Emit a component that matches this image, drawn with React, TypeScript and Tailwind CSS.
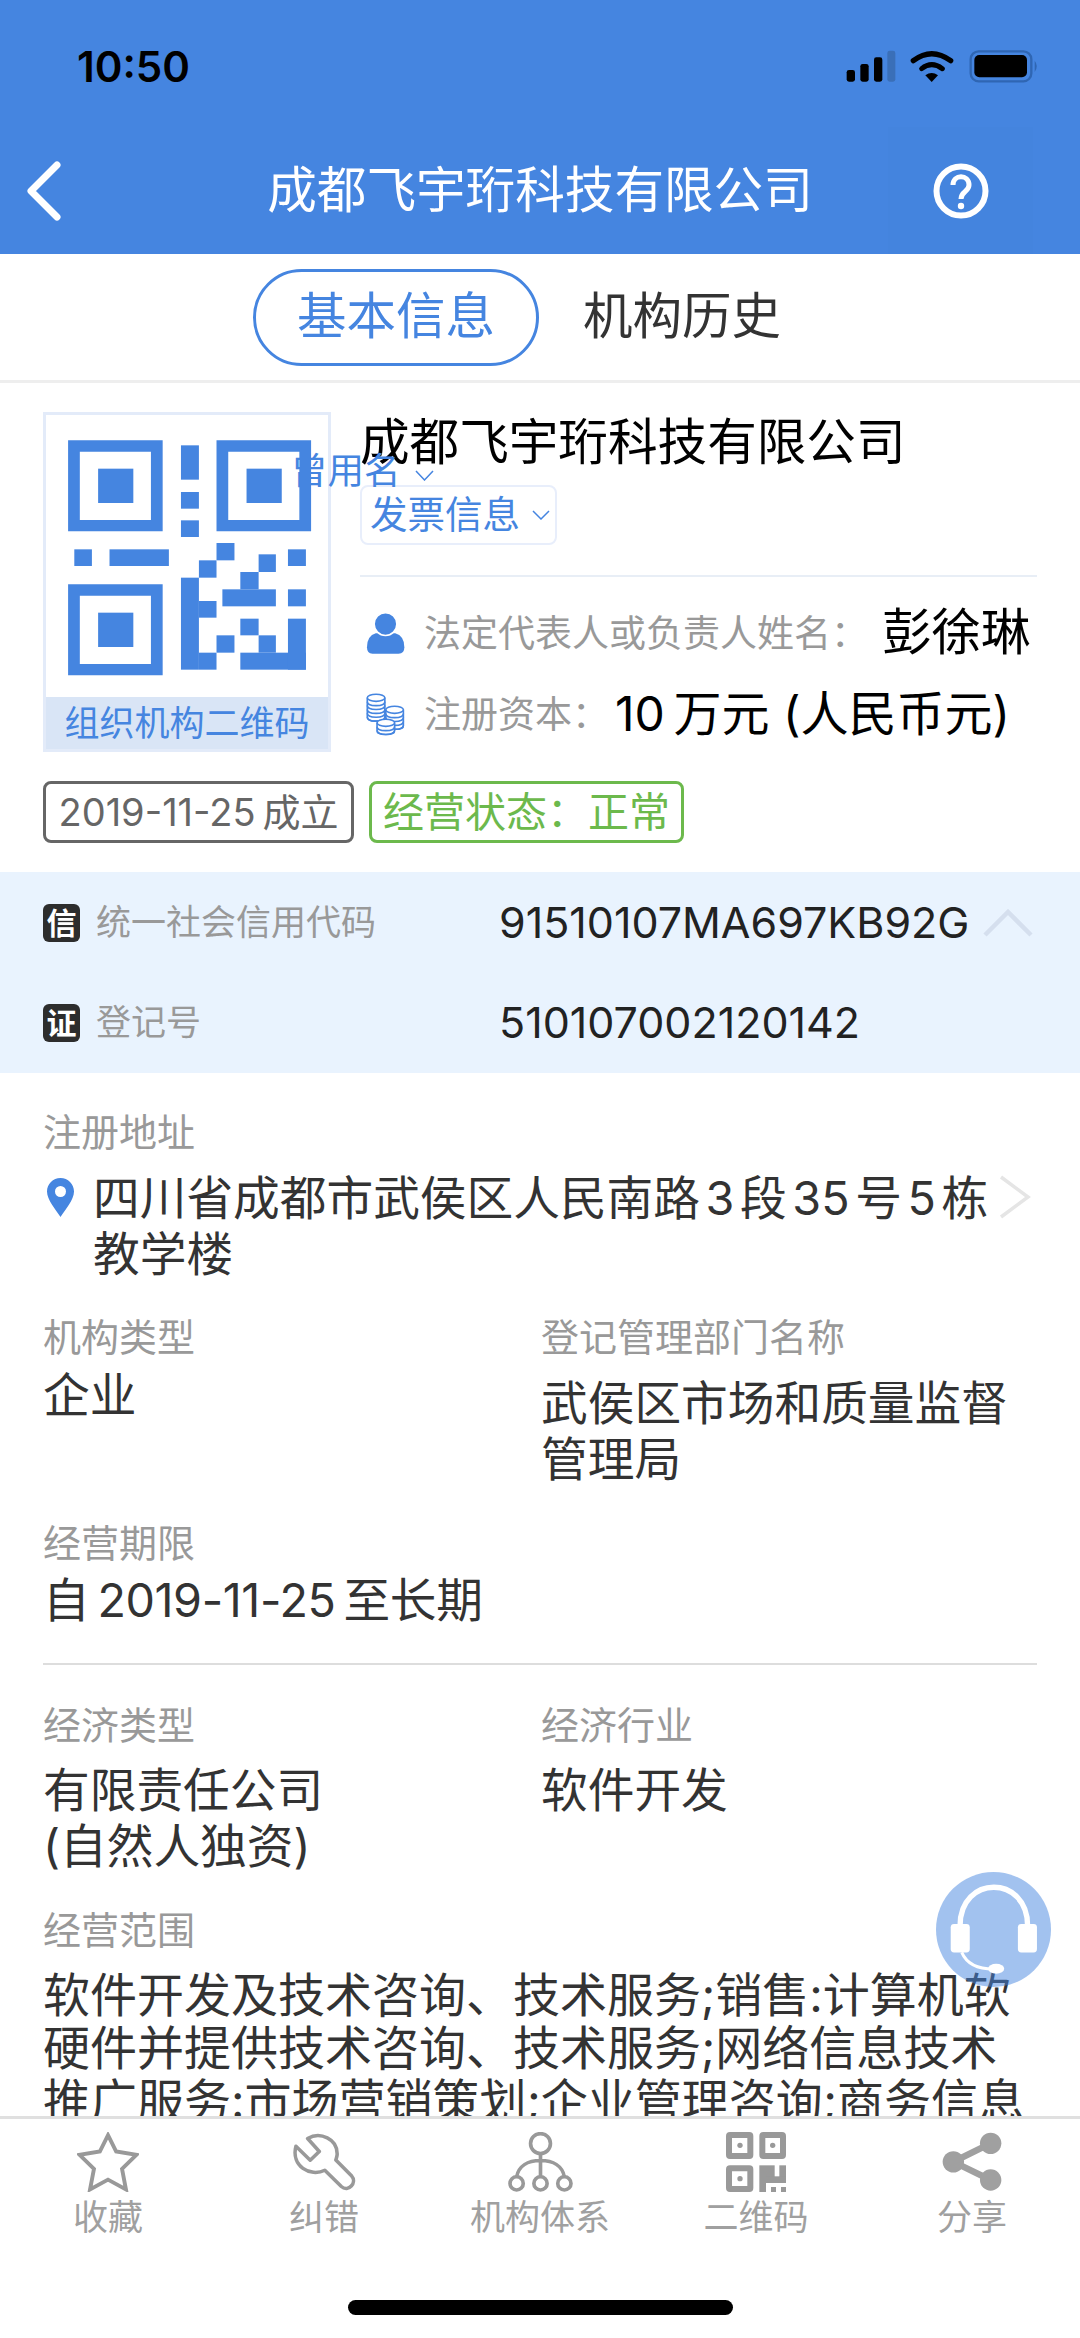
import type { ReactNode } from 'react';

const qrRects = [
    [525, 165, 52, 103], [525, 305, 52, 50], [525, 390, 52, 50],
    [216, 477, 51, 50], [318, 477, 172, 50],
    [628, 458, 52, 52], [750, 492, 50, 53], [835, 477, 52, 50],
    [577, 510, 51, 52], [697, 545, 53, 52], [645, 597, 155, 51], [835, 597, 52, 51],
    [525, 562, 52, 276], [577, 632, 51, 50], [577, 787, 51, 51],
    [628, 735, 52, 52], [697, 685, 53, 50], [750, 735, 50, 52], [697, 787, 190, 51], [835, 685, 52, 153],
];

function QrFinder({ x, y }: { x: number; y: number }) {
    return (
        <g>
            <path d={`M${x} ${y}h274v273h-274zM${x + 34} ${y + 34}v205h206v-205z`} fill="#4585e0" fillRule="evenodd" />
            <rect x={x + 87} y={y + 85} width={102} height={103} fill="#4585e0" />
        </g>
    );
}

function QrBox() {
    return (
        <div className="w-[288px] h-[340px] shrink-0 border-[3px] border-[#e3ebf9] flex flex-col">
            <svg className="w-[282px] h-[282px]" viewBox="134 74 817 846" preserveAspectRatio="none">
                <QrFinder x={198} y={150} />
                <QrFinder x={628} y={150} />
                <QrFinder x={198} y={582} />
                {qrRects.map(([x, y, w, h]) => (
                    <rect key={`${x}-${y}`} x={x} y={y} width={w} height={h} fill="#4585e0" />
                ))}
            </svg>
            <div className="flex-1 bg-[#d9e5f6] flex items-center justify-center text-[#4585e0] text-[35px] leading-none whitespace-nowrap">
                组织机构二维码
            </div>
        </div>
    );
}

function PersonIcon() {
    return (
        <svg className="w-[39px] h-[43px] shrink-0" viewBox="30 28 120 130">
            <path d="M33 135Q33 100 60 92L120 92Q148 100 148 135Q148 155 130 155L50 155Q33 155 33 135Z" fill="#4585e0" />
            <circle cx="90" cy="64" r="35" fill="#4585e0" stroke="#fff" strokeWidth="5" />
        </svg>
    );
}

function CoinStack({ cx, top, layers }: { cx: number; top: number; layers: number }) {
    const bottom = top + layers * 12;
    return (
        <g fill="#fff" stroke="#4585e0" strokeWidth="5">
            <path d={`M${cx - 27} ${top}V${bottom}C${cx - 27} ${bottom + 16} ${cx + 27} ${bottom + 16} ${cx + 27} ${bottom}V${top}`} />
            {Array.from({ length: layers }).map((_, i) => (
                <path
                    key={i}
                    fill="none"
                    d={`M${cx - 27} ${top + (i + 1) * 12}C${cx - 27} ${top + (i + 1) * 12 + 16} ${cx + 27} ${top + (i + 1) * 12 + 16} ${cx + 27} ${top + (i + 1) * 12}`}
                />
            ))}
            <ellipse cx={cx} cy={top} rx="27" ry="11" />
        </g>
    );
}

function CoinsIcon() {
    return (
        <svg className="w-[39px] h-[45px] shrink-0" viewBox="32 282 120 135">
            <CoinStack cx={63} top={298} layers={5} />
            <CoinStack cx={120} top={335} layers={4} />
            <CoinStack cx={93} top={375} layers={2} />
        </svg>
    );
}

function Badge({ children }: { children: ReactNode }) {
    return (
        <div className="w-[37px] h-[38px] shrink-0 rounded-[6px] bg-[#2d2d2d] text-white text-[30px] font-bold leading-none flex items-center justify-center">
            {children}
        </div>
    );
}

function Label({ children }: { children: ReactNode }) {
    return <div className="h-[50px] text-[#999999] text-[38px] leading-[50px]">{children}</div>;
}

function Value({ children }: { children: ReactNode }) {
    return <div className="text-[#333333] text-[46.7px] leading-[56px]">{children}</div>;
}

function StatusBar() {
    return (
        <div className="h-[127px] flex justify-between pl-[77px] pr-[30px] pt-[46px]">
            <div className="text-[42px] leading-[42px] font-semibold text-black">10:50</div>
            <svg className="w-[220px] h-[60px] -mt-[6px]" viewBox="0 0 660 180">
                <rect x="50" y="90" width="25" height="35" rx="7" fill="#000" />
                <rect x="91" y="72" width="25" height="53" rx="7" fill="#000" />
                <rect x="132" y="52" width="25" height="73" rx="7" fill="#000" />
                <rect x="172" y="32" width="24" height="93" rx="7" fill="#3a6fb8" />
                <path d="M250 62Q305 20 362 62" fill="none" stroke="#000" strokeWidth="16" strokeLinecap="round" />
                <path d="M275 86Q305 62 337 86" fill="none" stroke="#000" strokeWidth="15" strokeLinecap="round" />
                <path d="M286 106Q305 92 324 106L305 126Z" fill="#000" />
                <rect x="422" y="34" width="182" height="90" rx="24" fill="none" stroke="#2f66b3" strokeWidth="7" />
                <rect x="433" y="45" width="158" height="67" rx="15" fill="#000" />
                <path d="M614 62Q627 78 614 96Z" fill="#2f66b3" />
            </svg>
        </div>
    );
}

function NavBar() {
    return (
        <div className="h-[127px] grid grid-cols-[192px_1fr_192px]">
            <div className="flex items-center pl-[26px]">
                <svg className="w-[36px] h-[60px]" viewBox="0 0 36 60">
                    <path d="M31 4L5 30L31 56" fill="none" stroke="#fff" strokeWidth="7" strokeLinecap="round" strokeLinejoin="round" />
                </svg>
            </div>
            <div className="flex items-center justify-center text-white text-[49.6px] leading-none whitespace-nowrap">
                成都飞宇珩科技有限公司
            </div>
            <div className="w-[145px] bg-[#4484de] flex items-center justify-center">
                <svg className="w-[56px] h-[56px]" viewBox="0 0 56 56">
                    <circle cx="28" cy="28" r="24.5" fill="none" stroke="#fff" strokeWidth="6" />
                    <path d="M20 22C20 11 36 11 36 22C36 29 28 28 28 36" fill="none" stroke="#fff" strokeWidth="5" />
                    <circle cx="28" cy="43" r="3.2" fill="#fff" />
                </svg>
            </div>
        </div>
    );
}

function Tabs() {
    return (
        <div className="h-[129px] border-b-[3px] border-[#eeeeee] flex items-center justify-center text-[49.5px] leading-none -ml-[2px]">
            <div className="w-[286px] h-[97px] rounded-full border-[3px] border-[#4585e0] text-[#4585e0] flex items-center justify-center">
                基本信息
            </div>
            <div className="w-[286px] text-center text-[#333333]">机构历史</div>
        </div>
    );
}

function Summary() {
    return (
        <div className="relative px-[43px] pt-[29px] pb-[29px]">
            <div className="flex gap-[29px]">
                <QrBox />
                <div className="flex-1">
                    <div className="text-black text-[49.6px] leading-[60px] whitespace-nowrap">成都飞宇珩科技有限公司</div>
                    <div className="mt-[13px] w-[197px] h-[60px] pl-[8px] border-[2px] border-[#e8eefb] rounded-[8px] flex items-center gap-[12px] text-[#4585e0] text-[37.5px] leading-none whitespace-nowrap">
                        发票信息
                        <svg className="w-[18px] h-[10px]" viewBox="0 0 18 10">
                            <path d="M1 1L9 9L17 1" fill="none" stroke="#4585e0" strokeWidth="1.5" />
                        </svg>
                    </div>
                    <div className="mt-[30px] h-[2px] bg-[#e8eef6]" />
                    <div className="mt-[26px] h-[60px] pl-[6px] flex items-center">
                        <PersonIcon />
                        <span className="ml-[19px] text-[#999999] text-[37px] leading-none whitespace-nowrap">法定代表人或负责人姓名：</span>
                        <span className="ml-[14px] text-black text-[49.5px] leading-none whitespace-nowrap">彭徐琳</span>
                    </div>
                    <div className="mt-[21px] h-[60px] pl-[6px] flex items-center">
                        <CoinsIcon />
                        <span className="ml-[19px] text-[#999999] text-[37px] leading-none whitespace-nowrap">注册资本：</span>
                        <span className="ml-[6px] text-black text-[48px] leading-none whitespace-nowrap">10{'\u2009'}万元 (人民币元)</span>
                    </div>
                </div>
            </div>
            <div className="mt-[29px] flex gap-[15px]">
                <div className="w-[311px] h-[62px] border-[3px] border-[#666666] rounded-[8px] flex items-center justify-center text-[#666666] text-[38px] leading-none whitespace-nowrap">
                    2019-11-25{'\u2009'}成立
                </div>
                <div className="w-[315px] h-[62px] border-[3px] border-[#6cb94c] rounded-[8px] flex items-center justify-center text-[#6cb94c] text-[41px] leading-none whitespace-nowrap">
                    经营状态：正常
                </div>
            </div>
            {/* overlaps the qr and the title, same in the app */}
            <div className="absolute left-[291px] top-[70px] flex items-center gap-[14px] text-[#4585e0] text-[36.5px] leading-none whitespace-nowrap">
                曾用名
                <svg className="w-[19px] h-[11px] mt-[9px]" viewBox="0 0 19 11">
                    <path d="M1 1L9.5 10L18 1" fill="none" stroke="#4585e0" strokeWidth="1.5" />
                </svg>
            </div>
        </div>
    );
}

function CodeBand() {
    return (
        <div className="h-[201px] bg-[#e9f3fe] pl-[43px] pr-[47px] flex flex-col">
            <div className="h-[100px] pt-[1px] flex items-center">
                <Badge>信</Badge>
                <div className="ml-[16px] w-[403px] text-[#999999] text-[35px] leading-none">统一社会信用代码</div>
                <div className="flex-1 text-[#222222] text-[43px] leading-none whitespace-nowrap">91510107MA697KB92G</div>
                <svg className="w-[50px] h-[28px]" viewBox="0 0 50 28">
                    <path d="M2 26L25 3L48 26" fill="none" stroke="#d5dfee" strokeWidth="4.5" />
                </svg>
            </div>
            <div className="h-[100px] pt-[1px] flex items-center">
                <Badge>证</Badge>
                <div className="ml-[16px] w-[403px] text-[#999999] text-[35px] leading-none">登记号</div>
                <div className="flex-1 text-[#222222] text-[43px] leading-none">510107002120142</div>
            </div>
        </div>
    );
}

function Details() {
    return (
        <div className="px-[43px] pt-[34px]">
            <Label>注册地址</Label>
            <div className="mt-[13px] flex">
                <svg className="w-[27px] h-[39px] mt-[8px] ml-[4px] shrink-0" viewBox="0 0 27 39">
                    <path d="M13.5 0C6 0 0 6 0 13.5C0 22 9 32 13.5 39C18 32 27 22 27 13.5C27 6 21 0 13.5 0Z" fill="#4585e0" />
                    <circle cx="13.5" cy="13.5" r="5.5" fill="#fff" />
                </svg>
                <div className="ml-[19px] w-[906px] whitespace-nowrap [word-spacing:-7.5px]">
                    <Value>
                        四川省成都市武侯区人民南路 3 段 35 号 5 栋
                        <br />
                        教学楼
                    </Value>
                </div>
                <svg className="w-[32px] h-[44px] mt-[5px] shrink-0" viewBox="0 0 32 44">
                    <path d="M2 2L29 22L2 42" fill="none" stroke="#e5e5e5" strokeWidth="3.5" />
                </svg>
            </div>

            <div className="mt-[30px] grid grid-cols-[498px_1fr]">
                <div>
                    <Label>机构类型</Label>
                    <div className="mt-[5px]"><Value>企业</Value></div>
                </div>
                <div>
                    <Label>登记管理部门名称</Label>
                    <div className="mt-[13px]">
                        <Value>武侯区市场和质量监督<br />管理局</Value>
                    </div>
                </div>
            </div>

            <div className="mt-[31px]">
                <Label>经营期限</Label>
                <div className="mt-[4px] tracking-[-0.4px]"><Value>自{'\u2009'}2019-11-25{'\u2009'}至长期</Value></div>
            </div>

            <div className="mt-[35px] h-[2px] bg-[#dddddd] w-[994px]" />

            <div className="mt-[35px] grid grid-cols-[498px_1fr]">
                <div>
                    <Label>经济类型</Label>
                    <div className="mt-[12px]">
                        <Value>有限责任公司<br />(自然人独资)</Value>
                    </div>
                </div>
                <div>
                    <Label>经济行业</Label>
                    <div className="mt-[12px]"><Value>软件开发</Value></div>
                </div>
            </div>

            <div className="mt-[31px]">
                <Label>经营范围</Label>
                <div className="mt-[13px] text-[#333333] text-[47px] leading-[53px] whitespace-nowrap">
                    <div>软件开发及技术咨询、技术服务;销售:计算机软</div>
                    <div>硬件并提供技术咨询、技术服务;网络信息技术</div>
                    <div>推广服务:市场营销策划;企业管理咨询;商务信息</div>
                </div>
            </div>
        </div>
    );
}

function StarIcon() {
    return (
        <svg className="w-[62px] h-[60px]" viewBox="50 33 190 182">
            <path d="M145 42L170 92L232 102L188 145L200 208L145 178L90 208L102 145L58 102L120 92Z" fill="none" stroke="#999999" strokeWidth="12" />
        </svg>
    );
}

function WrenchIcon() {
    return (
        <svg className="w-[64px] h-[60px]" viewBox="695 30 195 185">
            <path
                d="M706 74L750 117L778 90L742 50C780 28 835 50 833 100C832 108 830 112 829 116L878 166C895 185 868 218 846 198L795 148C750 170 690 135 706 74Z"
                fill="none"
                stroke="#999999"
                strokeWidth="11"
                strokeLinejoin="round"
            />
        </svg>
    );
}

function TreeIcon() {
    return (
        <svg className="w-[65px] h-[60px]" viewBox="86 32 196 181">
            <g fill="none" stroke="#999999" strokeWidth="11">
                <circle cx="184" cy="67" r="30" />
                <circle cx="112" cy="187" r="20" />
                <circle cx="184" cy="187" r="20" />
                <circle cx="256" cy="187" r="20" />
                <path d="M184 97V167M112 167C118 135 145 118 184 118C223 118 250 135 256 167" />
            </g>
        </svg>
    );
}

function QrIcon() {
    return (
        <svg className="w-[60px] h-[60px]" viewBox="740 32 180 180">
            <g fill="none" stroke="#999999" strokeWidth="18">
                <rect x="749" y="41" width="64" height="63" rx="3" />
                <rect x="849" y="41" width="62" height="63" rx="3" />
                <rect x="749" y="141" width="64" height="62" rx="3" />
            </g>
            <g fill="#999999">
                <circle cx="782" cy="72" r="8" />
                <circle cx="880" cy="72" r="8" />
                <circle cx="782" cy="172" r="8" />
                <rect x="840" y="132" width="20" height="80" />
                <rect x="860" y="132" width="26" height="38" />
                <rect x="900" y="132" width="20" height="50" />
                <rect x="860" y="165" width="60" height="20" />
                <rect x="875" y="197" width="15" height="15" />
                <rect x="905" y="197" width="15" height="15" />
            </g>
        </svg>
    );
}

function ShareIcon() {
    return (
        <svg className="w-[60px] h-[60px]" viewBox="125 15 185 185">
            <path d="M275 50L160 107L275 163" fill="none" stroke="#a0a0a0" strokeWidth="20" />
            <circle cx="275" cy="50" r="33" fill="#a0a0a0" />
            <circle cx="160" cy="107" r="33" fill="#a0a0a0" />
            <circle cx="275" cy="163" r="33" fill="#a0a0a0" />
        </svg>
    );
}

const tabs = [
    { label: '收藏', icon: <StarIcon /> },
    { label: '纠错', icon: <WrenchIcon /> },
    { label: '机构体系', icon: <TreeIcon /> },
    { label: '二维码', icon: <QrIcon /> },
    { label: '分享', icon: <ShareIcon /> },
];

function Footer() {
    return (
        <div className="relative h-[222px] shrink-0 bg-white border-t-[3px] border-[#e0e0e0]">
            <div className="grid grid-cols-5 pt-[13px]">
                {tabs.map((t) => (
                    <div key={t.label} className="flex flex-col items-center">
                        {t.icon}
                        <div className="mt-[5px] text-[#a0a0a0] text-[35px] leading-[40px]">{t.label}</div>
                    </div>
                ))}
            </div>
            <div className="absolute left-[348px] top-[181px] w-[385px] h-[15px] rounded-full bg-black" />
        </div>
    );
}

export default function App() {
    return (
        <div className="relative w-[1080px] h-[2338px] overflow-hidden bg-white flex flex-col font-[Inter,'Noto_Sans_CJK_SC',sans-serif]">
            <div className="h-[254px] shrink-0 bg-[#4585e0]">
                <StatusBar />
                <NavBar />
            </div>
            <Tabs />
            <div className="flex-1 overflow-hidden">
                <Summary />
                <CodeBand />
                <Details />
            </div>
            <Footer />

            {/* floating service button, sits on top of the text */}
            <div className="absolute left-[936px] top-[1872px] w-[115px] h-[115px] rounded-full bg-[#4585e0]/50">
                <svg className="w-[115px] h-[115px]" viewBox="108 65 344 343">
                    <path d="M180 225C180 72 382 72 382 225" fill="none" stroke="#fff" strokeWidth="16" />
                    <rect x="152" y="220" width="57" height="85" rx="10" fill="#fff" />
                    <rect x="353" y="220" width="57" height="85" rx="10" fill="#fff" />
                    <path d="M185 305C200 340 230 355 280 355" fill="none" stroke="#fff" strokeWidth="9" />
                    <ellipse cx="288" cy="354" rx="24" ry="15" fill="#fff" />
                </svg>
            </div>
        </div>
    );
}
